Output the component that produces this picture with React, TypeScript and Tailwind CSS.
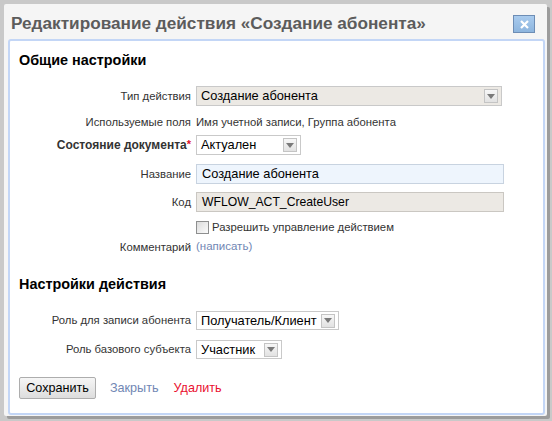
import React from 'react';

// Стрелка выпадающего списка
const Arrow = () => (
  <span className="absolute right-[3px] top-1/2 -translate-y-1/2 w-[14px] h-[14px] border border-[#c4c4c4] bg-gradient-to-b from-[#f7f7f7] to-[#e2e2e2] flex items-center justify-center">
    <svg width="8" height="5" viewBox="0 0 8 5">
      <path d="M0 0h8L4 5z" fill="#7a7a7a" />
    </svg>
  </span>
);

const Select = ({ value, width, bg = 'bg-white', h = 'h-[20px]' }: { value: string; width: string; bg?: string; h?: string }) => (
  <div className={`relative ${width} ${h} ${bg} border border-[#c9c9c9] flex items-center pl-[4px] text-[12.8px] text-black`}>
    {value}
    <Arrow />
  </div>
);

const Row = ({ label, children, className = '', bold = false, required = false }: { label: React.ReactNode; children?: React.ReactNode; className?: string; bold?: boolean; required?: boolean }) => (
  <div className={`grid grid-cols-[172px_1fr] gap-x-[5px] items-center ${className}`}>
    <div className={`text-right text-[#333] ${bold ? 'font-bold text-[12px]' : 'text-[11.3px]'}`}>
      {label}
      {required && <sup className="text-[#e0102a] text-[11px] font-bold relative -top-[1px]">*</sup>}
    </div>
    <div className="flex items-center">{children}</div>
  </div>
);

export default function App() {
  return (
    <div className="w-[552px] h-[421px] bg-[#c9c9c9] pl-[4px] pt-[4px] overflow-hidden" style={{ fontFamily: '"Liberation Sans", Arial, sans-serif' }}>
      <div className="w-[543px] h-[412px] bg-[#f5f5f5] rounded-[2px] shadow-[3px_3px_0_#9c9c9c] flex flex-col">
        {/* Заголовок окна */}
        <div className="h-[35px] flex items-start justify-between pl-[7px] pr-[12px]">
          <h1 className="mt-[10px] text-[17.2px] leading-[18px] font-bold text-[#5c5c5c]">Редактирование действия «Создание абонента»</h1>
          <button className="mt-[11px] w-[22px] h-[18px] border border-[#6d8db5] bg-gradient-to-b from-[#a9cbee] to-[#8db5de] flex items-center justify-center">
            <svg width="9" height="9" viewBox="0 0 9 9">
              <path d="M1 1l7 7M8 1L1 8" stroke="white" strokeWidth="2.2" />
            </svg>
          </button>
        </div>

        {/* Основная панель */}
        <div className="ml-[4px] mr-[2px] mb-[1px] flex-1 border-2 border-[#c3d6f6] rounded-[3px] bg-white pl-[9px]">
          <h2 className="mt-[10px] text-[14.4px] leading-[18px] font-bold text-black">Общие настройки</h2>

          <Row label="Тип действия" className="mt-[17px] h-[20px]">
            <Select value="Создание абонента" width="w-[306px]" bg="bg-[#ece9e4]" />
          </Row>
          <Row label="Используемые поля" className="mt-[6px] h-[20px]">
            <span className="text-[11.3px] text-[#333]">Имя учетной записи, Группа абонента</span>
          </Row>
          <Row label="Состояние документа" bold required className="mt-[3px] h-[20px]">
            <Select value="Актуален" width="w-[105px]" />
          </Row>
          <Row label="Название" className="mt-[9px] h-[20px]">
            <div className="w-[308px] h-[20px] bg-[#eef5fd] border border-[#c8d3e0] pl-[5px] flex items-center text-[12.8px] text-black">Создание абонента</div>
          </Row>
          <Row label="Код" className="mt-[8px] h-[20px]">
            <div className="w-[308px] h-[20px] bg-[#ece9e4] border border-[#cac7c2] pl-[5px] flex items-center text-[12.2px] text-black">WFLOW_ACT_CreateUser</div>
          </Row>
          <Row label="" className="mt-[6px] h-[18px]">
            <span className="w-[13px] h-[13px] border border-[#8e8f8f] bg-gradient-to-br from-[#dcdcdc] to-[#fbfbfb] mr-[3px]" />
            <span className="text-[11.3px] text-[#333]">Разрешить управление действием</span>
          </Row>
          <Row label="Комментарий" className="mt-[1px] h-[20px]">
            <span className="text-[11.5px] text-[#7187b4]">(написать)</span>
          </Row>

          <h2 className="mt-[18px] text-[14.4px] leading-[18px] font-bold text-black">Настройки действия</h2>

          <Row label="Роль для записи абонента" className="mt-[18px] h-[19px]">
            <Select value="Получатель/Клиент" width="w-[143px]" h="h-[19px]" />
          </Row>
          <Row label="Роль базового субъекта" className="mt-[10px] h-[19px]">
            <Select value="Участник" width="w-[86px]" h="h-[19px]" />
          </Row>

          {/* Кнопки */}
          <div className="mt-[18px] flex items-center text-[12.6px]">
            <button className="h-[22px] w-[77px] border border-[#adadad] rounded-[2px] bg-gradient-to-b from-[#f6f6f6] to-[#dddddd] text-black">Сохранить</button>
            <span className="ml-[14px] text-[#7187b4]">Закрыть</span>
            <span className="ml-[15px] text-[#ea1030]">Удалить</span>
          </div>
        </div>
      </div>
    </div>
  );
}
